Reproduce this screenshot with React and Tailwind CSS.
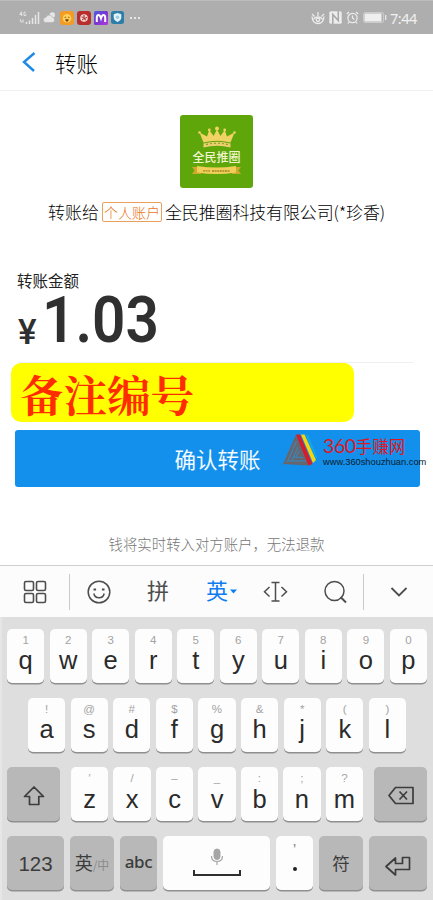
const CJK = "font-['Noto_Sans_CJK_SC',sans-serif]";

const topRow = [["1", "q"], ["2", "w"], ["3", "e"], ["4", "r"], ["5", "t"], ["6", "y"], ["7", "u"], ["8", "i"], ["9", "o"], ["0", "p"]];
const homeRow = [["!", "a"], ["@", "s"], ["#", "d"], ["$", "f"], ["%", "g"], ["&", "h"], ["*", "j"], ["(", "k"], [")", "l"]];
const bottomRow = [["′", "z"], ["/", "x"], ["–", "c"], ["_", "v"], [":", "b"], [";", "n"], ["?", "m"]];

function LetterKey({ hint, letter, low }) {
  return (
    <div className="w-[37.2px] h-[54px] pt-[5px] rounded-[5px] bg-[#fdfdfd] shadow-[0_1.5px_0_#8f8f8f] flex flex-col items-center font-['Liberation_Sans',sans-serif]">
      <span className="h-3 text-[11.5px] leading-[13px] text-[#a3a3a3]">{hint}</span>
      <span className={`text-[25.5px] leading-[26px] text-[#2b2b2b] ${low ? "mt-[2px]" : "mt-px"}`}>{letter}</span>
    </div>
  );
}

function GreyKey({ className, children }) {
  return (
    <div className={`h-[54px] rounded-[5px] bg-[#b8b8b8] shadow-[0_1.5px_0_#8f8f8f] flex items-center justify-center text-[#3c3c3c] ${className}`}>
      {children}
    </div>
  );
}

function StatusBar() {
  return (
    <div className="h-[34.5px] bg-[#aeaeae] border-t border-[#bdbdbd] pl-[19px] pr-[16px] flex items-center justify-between">
      <div className="flex items-center">
        <svg width="21" height="14" viewBox="0 0 21 14" fill="none" stroke="#e6e6e6">
          <path d="M2.5 .5L.8 3.5h2.6M2.7 1v4M6.8 1.2H5v3.3h1.8V3" strokeWidth=".9" />
          <path d="M1 8.5l1.5 3M4 8.5v3" strokeWidth="1.1" />
          <path d="M7.5 13v-2M10.5 13V9.5M13.5 13V7M16.5 13V4M19.5 13V1" strokeWidth="1.5" />
        </svg>
        <svg className="ml-[3px]" width="13" height="13" viewBox="0 0 13 13" fill="#e6e6e6">
          <circle cx="9.3" cy="4" r="2.7" />
          <path d="M3 11.5a2.6 2.6 0 0 1 0-5.2 3.4 3.4 0 0 1 6.2-.4A3 3 0 0 1 10 11.5z" stroke="#aeaeae" strokeWidth=".6" />
        </svg>
        <svg className="ml-[4px]" width="14" height="14" viewBox="0 0 14 14">
          <rect width="14" height="14" rx="3" fill="#f39b22" />
          <circle cx="7" cy="7.3" r="4.3" fill="#ffd25a" />
          <path d="M4.5 6.5q1-1 1.8 0M7.8 6.5q1-1 1.8 0M5.5 8.5h3q-.4 2-1.5 2t-1.5-2" fill="#7a3b0c" stroke="#7a3b0c" strokeWidth=".5" />
        </svg>
        <svg className="ml-[3px]" width="14" height="14" viewBox="0 0 14 14">
          <rect width="14" height="14" rx="3" fill="#b82e2c" />
          <circle cx="7" cy="7" r="3.8" fill="#f1d9d4" />
          <path d="M4.5 6l2 .4M7 4v3.5l3-1M5 9l2-1.4 2 1.6" fill="none" stroke="#a52623" strokeWidth="1" />
        </svg>
        <svg className="ml-[3px]" width="14" height="14" viewBox="0 0 14 14">
          <defs>
            <linearGradient id="m" x1="0" y1="0" x2="1" y2="1">
              <stop offset="0" stopColor="#4b5fe0" />
              <stop offset=".5" stopColor="#7a35d0" />
              <stop offset="1" stopColor="#b43bdc" />
            </linearGradient>
          </defs>
          <rect width="14" height="14" rx="1.5" fill="url(#m)" />
          <path d="M2.8 11V6.5Q2.8 4 4.5 4 6 4 7 7.3 8 4 9.5 4q1.7 0 1.7 2.5V11" fill="none" stroke="#fff" strokeWidth="2" />
        </svg>
        <svg className="ml-[3px]" width="13" height="13" viewBox="0 0 13 13">
          <rect width="13" height="13" rx="2.5" fill="#2c7ea8" />
          <path d="M6.5 2l3.8 1.3v3Q10.3 9.5 6.5 11 2.7 9.5 2.7 6.3v-3z" fill="#e4f2f8" />
          <circle cx="6.5" cy="6.3" r="1.7" fill="#9dcbe0" />
        </svg>
        <div className="ml-[6px] flex gap-[2px]">
          <i className="size-[2px] bg-[#e6e6e6]" />
          <i className="size-[2px] bg-[#e6e6e6]" />
          <i className="size-[2px] bg-[#e6e6e6]" />
        </div>
      </div>
      <div className="flex items-center">
        <svg width="14" height="14" viewBox="0 0 14 14" fill="none" stroke="#ececec" strokeWidth="1.3">
          <path d="M1 5.5Q1.5 12.5 7 12.5T13 5.5M2.5 8Q7 4 11.5 8" />
          <circle cx="7" cy="8.8" r="1.7" />
          <path d="M7 1v4M1 3l2.5 2.5M13 3l-2.5 2.5" />
        </svg>
        <svg className="ml-[4px]" width="13" height="13" viewBox="0 0 13 13">
          <rect x=".3" y=".3" width="12.4" height="12.4" rx="1.5" fill="#ececec" />
          <path d="M3.8 13V3.5l5.5 6V0" fill="none" stroke="#a8a8a8" strokeWidth="1.5" />
        </svg>
        <svg className="ml-[4px]" width="13" height="13" viewBox="0 0 13 13" fill="none" stroke="#ececec" strokeWidth="1.3">
          <circle cx="6.5" cy="7" r="4.6" />
          <path d="M6.5 4.5V7l1.8 1.5M.8 3L3 1M12.2 3L10 1M3 11l-1 1.5M10 11l1 1.5" />
        </svg>
        <svg className="ml-[4px]" width="24" height="11" viewBox="0 0 24 11">
          <rect x=".6" y=".6" width="20" height="9.8" rx="1.5" fill="none" stroke="#cfcfcf" />
          <rect x="1.5" y="1.5" width="17" height="8" fill="#efefef" />
          <path d="M22.7 3v5" stroke="#ececec" strokeWidth="1.2" />
        </svg>
        <span className="ml-[3px] w-[27px] text-[14.5px] leading-[14px] text-[#f0f0f0] font-['Noto_Sans',sans-serif] whitespace-nowrap tracking-[-0.5px]">7:44</span>
      </div>
    </div>
  );
}

function BrandLogo() {
  return (
    <div className="mt-px size-[73px] mx-auto rounded-[3px] bg-[#5fa60a] flex flex-col items-center pt-[11px]">
      <svg width="38" height="22" viewBox="0 0 38 22" fill="#f1d264">
        <path d="M5.5 16.5L1.5 6.5l7.5 4 2.3-6.5 4.2 6L19 3.5l3.5 6.5 4.2-6L29 10.5l7.5-4-4 10q-13.5-3.5-27 0z" />
        <path d="M5.5 17.5q13.5-3.5 27 0v4q-13.5-3.5-27 0z" fill="#ecd070" />
        <circle cx="19" cy="2.5" r="2" />
        <circle cx="11.3" cy="4" r="1.4" />
        <circle cx="26.7" cy="4" r="1.4" />
        <circle cx="1.5" cy="6.5" r="1.3" />
        <circle cx="36.5" cy="6.5" r="1.3" />
        <path d="M8 18.5q11-2.5 22 0" fill="none" stroke="#8f9a20" strokeWidth="1.2" strokeDasharray="2 2" />
      </svg>
      <span className="mt-px text-[12px] leading-[15px] text-[#f0f5cf] font-medium">全民推圈</span>
      <svg className="mt-[2px]" width="49" height="9" viewBox="0 0 49 9">
        <path d="M0 1h9v7H0l2.5-3.5zM49 1h-9v7h9l-2.5-3.5z" fill="#d0a830" />
        <path d="M5 0q19.500 3 39 0v6.500q-19.500 3-39 0z" fill="#f0cf58" />
        <path d="M11 4.800h7M20 5h18" stroke="#a58625" strokeWidth="1.3" strokeDasharray="2 .6" />
      </svg>
    </div>
  );
}

function Watermark() {
  return (
    <div className="absolute left-[268px] top-[3px] flex">
      <svg width="34" height="34" viewBox="0 0 34 34">
        <path d="M13 1.5L0 31l26 1.5z" fill="#66666c" />
        <path d="M13.5 8L5 27.5M15 14L9 27.5M3 28h20M10 24l10 .5M16 18l-3 6" fill="none" stroke="#318bcf" strokeWidth="1" />
        <path d="M13 1.5h4L29.5 31l-4 1.5z" fill="#d51c2c" />
        <path d="M18 1.5h3.5L33 27l-3 3z" fill="#f5d60c" />
        <path d="M22.5 1.5h2.5L34 24l-1 2.5z" fill="#10a8e8" />
      </svg>
      <div className="ml-[6px] mt-px flex flex-col">
        <div className="flex items-center h-[23px] text-[#dc1824] whitespace-nowrap">
          <span className="text-[19.5px] leading-[20px] font-['Lato',sans-serif] tracking-[-0.4px]">360</span>
          <span className="text-[16.5px] leading-[20px]">手赚网</span>
        </div>
        <span className="text-[9.3px] leading-[10px] text-[#0c1c2c] font-['Liberation_Sans',sans-serif] whitespace-nowrap">www.360shouzhuan.com</span>
      </div>
    </div>
  );
}

function Toolbar() {
  return (
    <div className="h-[52px] bg-[#fcfcfc] border-t border-[#cfcfcf] pl-[23px] pr-[25px] flex items-center text-[#4d4d4d]">
      <svg width="24" height="24" viewBox="0 0 24 24" fill="none" stroke="currentColor" strokeWidth="1.6">
        <rect x="1.5" y="1.5" width="9" height="9" rx="1.5" />
        <rect x="13.5" y="1.5" width="9" height="9" rx="1.5" />
        <rect x="1.5" y="13.5" width="9" height="9" rx="1.5" />
        <rect x="13.5" y="13.5" width="9" height="9" rx="1.5" />
      </svg>
      <div className="ml-[22px] w-px h-[36px] bg-[#c9c9c9]" />
      <svg className="ml-[17px]" width="24" height="24" viewBox="0 0 24 24" fill="none" stroke="currentColor" strokeWidth="1.5">
        <circle cx="12" cy="12" r="10.8" />
        <path d="M6.8 13.5q1 4.3 5.2 4.3t5.2-4.3" />
        <path d="M6.5 9.5h2.6M14.9 9.5h2.6" strokeWidth="1.8" />
      </svg>
      <span className="ml-[36px] pb-[5px] text-[22px] leading-[24px]">拼</span>
      <span className="ml-[37px] pb-[5px] text-[22px] leading-[24px] text-[#0f7df0]">英</span>
      <svg className="ml-[2px]" width="7" height="5" viewBox="0 0 7 5" fill="#0f7df0">
        <path d="M0 .5h7L3.5 4.5z" />
      </svg>
      <svg className="ml-[26px]" width="26" height="22" viewBox="0 0 26 22" fill="none" stroke="currentColor" strokeWidth="1.5">
        <path d="M8.5 1.5h8M8.5 20h8M12.5 1.5V20M6.5 6L1.5 10.8l5 4.7M18.5 6l5 4.8-5 4.7" />
      </svg>
      <svg className="ml-[34px]" width="24" height="24" viewBox="0 0 24 24" fill="none" stroke="currentColor" strokeWidth="1.5">
        <circle cx="11.5" cy="11" r="9.5" />
        <path d="M17.5 17l5.500 5.500" strokeWidth="2" />
      </svg>
      <div className="ml-[16px] w-px h-[36px] bg-[#c9c9c9]" />
      <svg className="ml-[26px]" width="18" height="12" viewBox="0 0 18 12" fill="none" stroke="currentColor" strokeWidth="1.8">
        <path d="M1.5 2l7.5 7.5L16.5 2" />
      </svg>
    </div>
  );
}

function Keyboard() {
  return (
    <div className="h-[283px] bg-[#dedede] border-l-2 border-[#e6e6e6] pl-[5px] pr-[6px] pt-[12px] flex flex-col gap-[15px]">
      <div className="flex justify-between">
        {topRow.map(([hint, letter]) => <LetterKey key={letter} hint={hint} letter={letter} />)}
      </div>
      <div className="flex justify-between pl-[21px] pr-[21px]">
        {homeRow.map(([hint, letter]) => <LetterKey key={letter} hint={hint} letter={letter} />)}
      </div>
      <div className="flex justify-between">
        <GreyKey className="w-[53px]">
          <svg className="mt-[3px]" width="22" height="20" viewBox="0 0 22 20" fill="none" stroke="currentColor" strokeWidth="1.7" strokeLinejoin="round">
            <path d="M11 1l9.500 9.500h-4.700V18.500H6.500v-8H1.500z" />
          </svg>
        </GreyKey>
        <div className="w-[292px] flex justify-between">
          {bottomRow.map(([hint, letter]) => <LetterKey key={letter} hint={hint} letter={letter} low />)}
        </div>
        <GreyKey className="w-[53px]">
          <svg className="mt-[2px]" width="26" height="19" viewBox="0 0 26 19" fill="none" stroke="currentColor" strokeWidth="1.7" strokeLinejoin="round">
            <path d="M7.500 1.500H25v16H7.500L1 9.500zM11.500 5.500l7.500 8M19 5.500l-7.500 8" />
          </svg>
        </GreyKey>
      </div>
      <div className="flex justify-between">
        <GreyKey className="w-[57px]">
          <span className="mt-[2px] text-[20.5px] leading-[24px] font-['Liberation_Sans',sans-serif]">123</span>
        </GreyKey>
        <GreyKey className="w-[44px]">
          <span className="pb-[3px] text-[18px] leading-[24px]">英</span>
          <span className="mt-[4px] text-[12px] leading-[14px] text-[#8c8c8c]">/中</span>
        </GreyKey>
        <GreyKey className="w-[37px]">
          <span className="text-[17px] leading-[22px] pb-[3px] font-['Noto_Sans',sans-serif] font-medium tracking-[-0.3px]">abc</span>
        </GreyKey>
        <div className="w-[107px] h-[54px] pt-[12px] rounded-[5px] bg-[#fdfdfd] shadow-[0_1.5px_0_#8f8f8f] flex flex-col items-center">
          <svg width="14" height="18" viewBox="0 0 14 18" fill="none" stroke="#a6a6a6">
            <rect x="4" y="1" width="6" height="10.5" rx="3" fill="#a6a6a6" />
            <path d="M1.5 8q0 5.5 5.5 5.5T12.5 8M7 13.5V17" strokeWidth="1.2" />
          </svg>
          <div className="mt-[4px] w-[48px] h-[6px] border-2 border-t-0 border-[#2f2f2f]" />
        </div>
        <div className="w-[37px] h-[54px] pt-[8px] rounded-[5px] bg-[#fdfdfd] shadow-[0_1.5px_0_#8f8f8f] flex flex-col items-center">
          <span className="h-[22px] text-[16px] leading-[14px] text-[#888] font-['Liberation_Sans',sans-serif]">’</span>
          <i className="mt-px size-[4px] rounded-[2px] bg-[#222]" />
        </div>
        <GreyKey className="w-[44px]">
          <span className="text-[17.5px] leading-[22px]">符</span>
        </GreyKey>
        <GreyKey className="w-[58px]">
          <svg className="mt-[5px]" width="26" height="20" viewBox="0 0 26 20" fill="none" stroke="currentColor" strokeWidth="1.7" strokeLinejoin="round">
            <path d="M1 10.5L10.5 2v5.5H17.5V1.5H24.5V13.5H10.5V19z" />
          </svg>
        </GreyKey>
      </div>
    </div>
  );
}

export default function App() {
  return (
    <div className={`w-[433px] h-[900px] overflow-hidden bg-white flex flex-col ${CJK}`}>
      <StatusBar />
      <div className="h-[57px] pl-[22px] border-b border-[#f1f1f1] flex items-center">
        <svg width="14" height="20" viewBox="0 0 14 20" fill="none" stroke="#1c8ae6" strokeWidth="2.4">
          <path d="M12.5 1L2 10l10 9" />
        </svg>
        <h1 className="ml-[19px] mt-px text-[21.5px] leading-[30px] text-black font-light">转账</h1>
      </div>

      <div className="h-[474px] pt-[23px] flex flex-col">
        <BrandLogo />
        <div className="mt-[12px] h-[24px] flex items-center pl-[48px] text-[17px] leading-[24px] text-black font-light whitespace-nowrap">
          <span>转账给</span>
          <span className="ml-[3px] w-[60px] h-[20px] rounded-[2px] border border-[#e9a05c] text-center text-[14px] leading-[18px] text-[#ea7417]">个人账户</span>
          <span className="ml-[3px] tracking-[-0.15px]">全民推圈科技有限公司(*珍香)</span>
        </div>

        <div className="mt-[46px] pl-[17px] text-[15.5px] leading-[20px] text-[#222]">转账金额</div>
        <div className="mt-px h-[72px] ml-[18px] mr-[20px] border-b border-[#efefef] flex text-[#303030] font-['Roboto',sans-serif] font-medium">
          <span className="mt-[24px] w-[22px] text-[35px] leading-[36px]">¥</span>
          <span className="origin-left scale-x-[0.9] mt-[4px] ml-[2px] text-[65px] leading-[50px] font-semibold">1.03</span>
        </div>
        <div className="ml-[11px] w-[343px] h-[59px] rounded-[10px] bg-[#ff0] pl-[9px] text-[43.5px] leading-[60px] text-[#ff2c00] font-bold font-['Noto_Serif_CJK_SC','Noto_Sans_CJK_SC',serif]">备注编号</div>
        <div className="relative mt-[8px] ml-[15px] w-[405px] h-[57px] rounded-[3px] bg-[#1390ec]">
          <div className="text-center text-[21.5px] leading-[58px] text-[#f2f9ff]">确认转账</div>
          <Watermark />
        </div>
        <p className="mt-[46px] text-center text-[14.4px] leading-[22px] text-[#777] font-light">钱将实时转入对方账户，无法退款</p>
      </div>

      <Toolbar />
      <Keyboard />
    </div>
  );
}
